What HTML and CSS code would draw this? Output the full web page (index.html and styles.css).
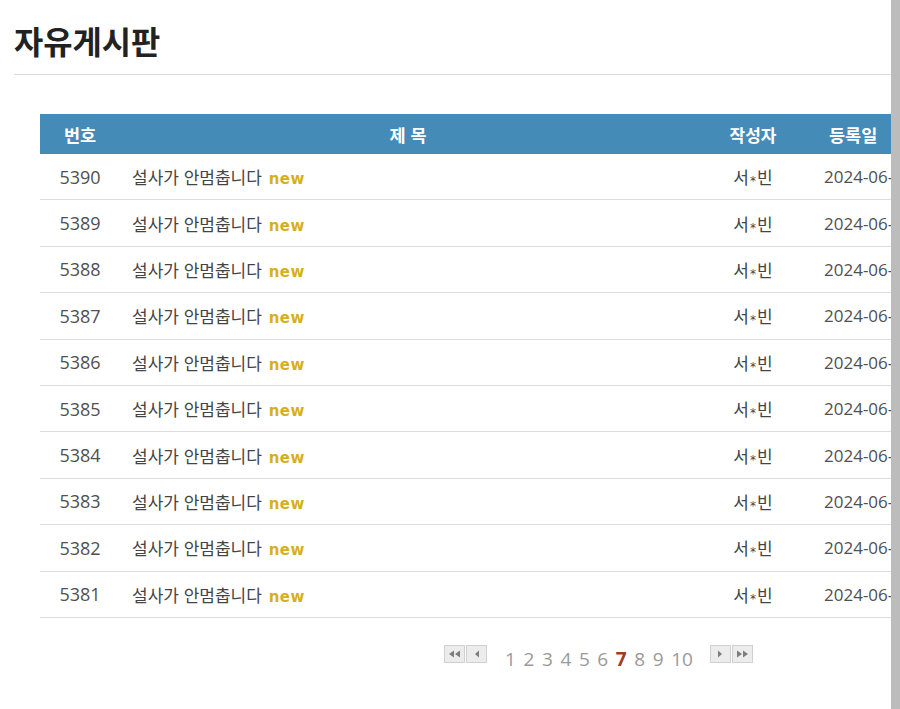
FILE: index.html
```html
<!DOCTYPE html>
<html lang="ko">
<head>
<meta charset="utf-8">
<link rel="stylesheet" href="styles.css">
</head>
<body>
<div class="page">
  <h1 class="title">자유게시판</h1>
  <div class="board">
    <div class="row head">
      <div class="c-no">번호</div>
      <div class="c-sub">제 목</div>
      <div class="c-wr">작성자</div>
      <div class="c-dt">등록일</div>
      <div class="c-hit">조회</div>
    </div>
    <div class="row"><div class="c-no">5390</div><div class="c-sub">설사가 안멈춥니다 <span class="new">new</span></div><div class="c-wr">서<span class="ast">*</span>빈</div><div class="c-dt">2024-06-28</div><div class="c-hit">3</div></div>
    <div class="row"><div class="c-no">5389</div><div class="c-sub">설사가 안멈춥니다 <span class="new">new</span></div><div class="c-wr">서<span class="ast">*</span>빈</div><div class="c-dt">2024-06-28</div><div class="c-hit">3</div></div>
    <div class="row"><div class="c-no">5388</div><div class="c-sub">설사가 안멈춥니다 <span class="new">new</span></div><div class="c-wr">서<span class="ast">*</span>빈</div><div class="c-dt">2024-06-28</div><div class="c-hit">3</div></div>
    <div class="row"><div class="c-no">5387</div><div class="c-sub">설사가 안멈춥니다 <span class="new">new</span></div><div class="c-wr">서<span class="ast">*</span>빈</div><div class="c-dt">2024-06-28</div><div class="c-hit">3</div></div>
    <div class="row"><div class="c-no">5386</div><div class="c-sub">설사가 안멈춥니다 <span class="new">new</span></div><div class="c-wr">서<span class="ast">*</span>빈</div><div class="c-dt">2024-06-28</div><div class="c-hit">3</div></div>
    <div class="row"><div class="c-no">5385</div><div class="c-sub">설사가 안멈춥니다 <span class="new">new</span></div><div class="c-wr">서<span class="ast">*</span>빈</div><div class="c-dt">2024-06-28</div><div class="c-hit">3</div></div>
    <div class="row"><div class="c-no">5384</div><div class="c-sub">설사가 안멈춥니다 <span class="new">new</span></div><div class="c-wr">서<span class="ast">*</span>빈</div><div class="c-dt">2024-06-28</div><div class="c-hit">3</div></div>
    <div class="row"><div class="c-no">5383</div><div class="c-sub">설사가 안멈춥니다 <span class="new">new</span></div><div class="c-wr">서<span class="ast">*</span>빈</div><div class="c-dt">2024-06-28</div><div class="c-hit">3</div></div>
    <div class="row"><div class="c-no">5382</div><div class="c-sub">설사가 안멈춥니다 <span class="new">new</span></div><div class="c-wr">서<span class="ast">*</span>빈</div><div class="c-dt">2024-06-28</div><div class="c-hit">3</div></div>
    <div class="row"><div class="c-no">5381</div><div class="c-sub">설사가 안멈춥니다 <span class="new">new</span></div><div class="c-wr">서<span class="ast">*</span>빈</div><div class="c-dt">2024-06-28</div><div class="c-hit">3</div></div>
  </div>
  <div class="paging">
    <div class="btns">
      <span class="btn"><svg width="14" height="10" viewBox="0 0 14 10"><path d="M1 5 L6 1.5 V8.5 Z M7 5 L12 1.5 V8.5 Z" fill="#7d7d7d"/></svg></span>
      <span class="btn"><svg width="10" height="10" viewBox="0 0 10 10"><path d="M3 5 L7 1.5 V8.5 Z" fill="#7d7d7d"/></svg></span>
    </div>
    <div class="nums">
      <a>1</a><a>2</a><a>3</a><a>4</a><a>5</a><a>6</a><a class="cur">7</a><a>8</a><a>9</a><a>10</a>
    </div>
    <div class="btns">
      <span class="btn"><svg width="10" height="10" viewBox="0 0 10 10"><path d="M3 1.5 L7 5 L3 8.5 Z" fill="#7d7d7d"/></svg></span>
      <span class="btn"><svg width="14" height="10" viewBox="0 0 14 10"><path d="M2 1.5 L7 5 L2 8.5 Z M8 1.5 L13 5 L8 8.5 Z" fill="#7d7d7d"/></svg></span>
    </div>
  </div>
</div>
<div class="scrollbar"></div>
</body>
</html>
```

FILE: styles.css
```css
html, body {
  margin: 0;
  padding: 0;
  background: #fff;
  overflow: hidden;
}
body {
  width: 900px;
  height: 709px;
  font-family: "Noto Sans CJK KR", "Noto Sans", sans-serif;
  color: #333;
}
.page {
  width: 1000px;
}
.title {
  margin: 0 0 0 14px;
  width: 886px;
  padding: 19px 0 13px;
  font-size: 31.8px;
  line-height: 42px;
  font-weight: bold;
  color: #222;
  border-bottom: 1px solid #ddd;
}
.board {
  margin: 39px 0 0 40px;
  width: 900px;
}
.row {
  display: grid;
  grid-template-columns: 80px 576px 114px 112px 80px;
  align-items: center;
  height: 45.4px;
  border-bottom: 1px solid #dcdcdc;
  font-size: 17px;
  color: #444;
}
.row.head {
  height: 40px;
  border-bottom: 0;
  background: #448bb8;
  color: #fff;
  font-weight: bold;
  font-size: 17.5px;
}
.c-no, .c-wr, .c-hit { text-align: center; }
.c-no, .c-dt {
  font-family: "Open Sans", "Noto Sans CJK KR", sans-serif;
  font-size: 18px;
  color: #505050;
}
.c-dt { font-size: 17px; }
.row.head .c-no, .row.head .c-dt {
  color: #fff;
  font-family: "Noto Sans CJK KR", sans-serif;
  font-size: 17.5px;
}
.c-sub { padding-left: 12px; }
.row.head .c-sub { padding-left: 0; text-align: center; }
.c-dt { padding-left: 14px; }
.row.head .c-dt { padding-left: 19px; }
.c-wr { font-size: 17px; }
.ast {
  font-family: "DejaVu Sans", sans-serif;
  font-size: 12px;
  vertical-align: -1px;
  margin: 0 1px;
}
.new {
  margin-left: 2px;
  font-family: "DejaVu Sans", sans-serif;
  font-weight: bold;
  font-size: 15px;
  color: #d6b01c;
  letter-spacing: 0.5px;
}
.paging {
  display: flex;
  align-items: center;
  margin: 26px 0 0 444px;
  height: 30px;
}
.btns {
  display: flex;
  align-items: center;
  margin-top: -10px;
}
.btn {
  display: flex;
  align-items: center;
  justify-content: center;
  width: 19px;
  height: 16px;
  background: #ececec;
  border: 1px solid #d0d0d0;
  margin-right: 1px;
}
.nums {
  display: flex;
  gap: 7.6px;
  margin: 0 17px 0 17px;
  font-family: "Open Sans", sans-serif;
  font-size: 19px;
  color: #9a9a9a;
}
.nums .cur {
  color: #a33b22;
  font-weight: bold;
}
.scrollbar {
  position: fixed;
  top: 0;
  right: 0;
  width: 9px;
  height: 709px;
  background: #bcbcbc;
}
```
